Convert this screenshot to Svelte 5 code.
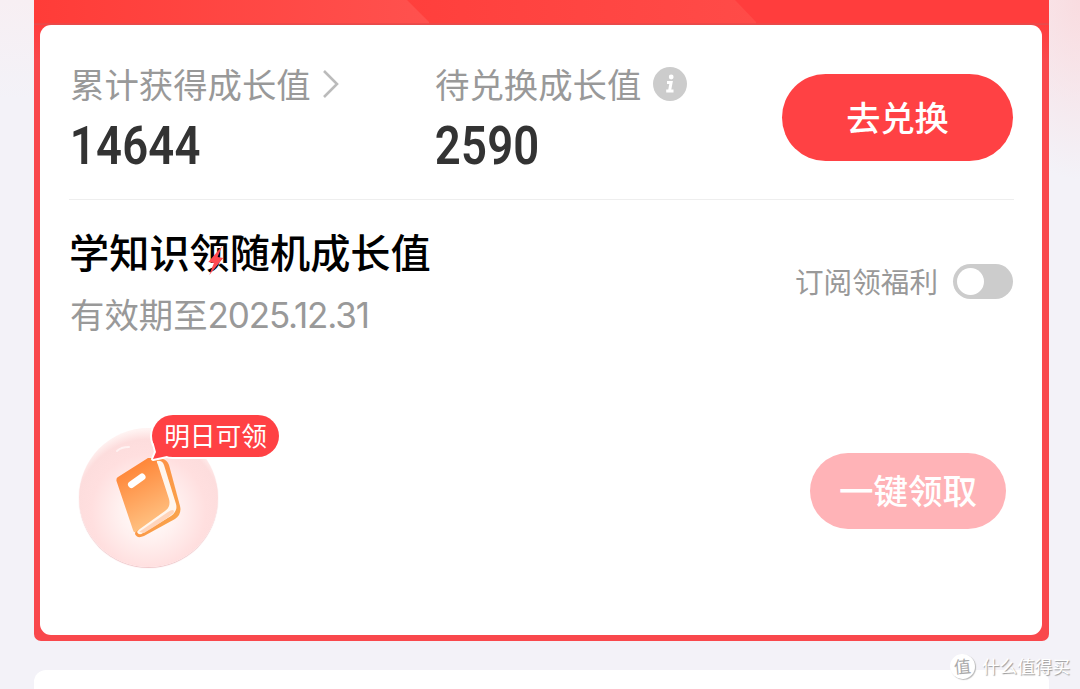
<script lang="ts">
	const stats = [
		{ label: '累计获得成长值', value: '14644', icon: 'arrow' },
		{ label: '待兑换成长值', value: '2590', icon: 'info' }
	];

	let subscribed = $state(false);
</script>

<div class="page">
	<section class="frame">
		<svg class="banner" viewBox="0 0 1015 25" aria-hidden="true">
			<defs>
				<linearGradient id="shade-a"><stop offset="0" stop-color="#ff3c38" /><stop offset="1" stop-color="#ff514e" /></linearGradient>
				<linearGradient id="shade-b"><stop offset="0" stop-color="#ff3e3b" /><stop offset="1" stop-color="#ff4b48" /></linearGradient>
			</defs>
			<path d="M340 0H701L722 22V25H340Z" fill="url(#shade-b)" />
			<path d="M0 0H373L395 22V25H0Z" fill="url(#shade-a)" />
			<path d="M0 23.2H1015V25H0Z" fill="#e94a4a" />
		</svg>

		<div class="card">
			<div class="stats">
				{#each stats as stat}
					<div class="stat">
						<div class="stat-label">
							<span>{stat.label}</span>
							{#if stat.icon === 'arrow'}
								<svg class="arrow" viewBox="0 0 18 32"><path d="M2 3L15 16L2 29" /></svg>
							{:else}
								<svg class="info" viewBox="0 0 34 34">
									<circle cx="17" cy="17" r="17" fill="#ccc" />
									<circle cx="18.2" cy="10" r="2.4" fill="#fff" />
									<path d="M14 15.5H18.1L16.5 24H20.5M13.2 24H17" fill="none" stroke="#fff" stroke-width="3" />
								</svg>
							{/if}
						</div>
						<div class="stat-value">{stat.value}</div>
					</div>
				{/each}
				<button class="exchange">去兑换</button>
			</div>

			<div class="task">
				<div class="task-text">
					<h2>
						学知识领随机成长值
						<svg class="bolt" viewBox="0 0 16 28"><path d="M14.5 0L1 15.5L6.5 16.5L2 28L15.5 11.5L10 10.5Z" /></svg>
					</h2>
					<p>有效期至<span class="date">2025.12.31</span></p>
				</div>
				<div class="subscribe">
					<span>订阅领福利</span>
					<button
						class="toggle"
						class:on={subscribed}
						aria-label="订阅领福利"
						onclick={() => (subscribed = !subscribed)}
					></button>
				</div>
			</div>

			<div class="reward">
				<div class="orb">
					<svg class="book" viewBox="0 0 240 180">
						<defs>
							<linearGradient id="cover" x1="0" y1="0" x2="0.35" y2="1">
								<stop offset="0" stop-color="#ff7928" />
								<stop offset="1" stop-color="#ffc080" />
							</linearGradient>
							<linearGradient id="edge" x1="0" y1="0" x2="1" y2="1">
								<stop offset="0" stop-color="#ff8840" />
								<stop offset="1" stop-color="#f8a94e" />
							</linearGradient>
						</defs>
						<path d="M57 51Q61 47 69 47" fill="none" stroke="#fff" stroke-width="2" stroke-linecap="round" opacity="0.6" />
						<path d="M88 58L103 59Q107 60 109 65L120 106Q122 114 115 119L84 136Q77 139 75 134Z" fill="url(#edge)" />
						<path d="M97 61Q102 60 104 65L116 104Q118 111 111 116L83 133Q79 136 77 132L80 128Z" fill="#fff6ed" />
						<path d="M79 132L108 112Q114 108 114 112Q112 116 84 133Z" fill="#ffd5bb" />
						<path d="M58 77L88 58Q96 57 98 65L109 99Q111 107 105 111L77 131Q74 134 73 130L56.5 81Q56 78 58 77Z" fill="url(#cover)" />
						<path d="M71.5 84.5L82 77" stroke="#fff" stroke-width="7" stroke-linecap="round" />
					</svg>
					<div class="tag">
						<svg class="tail" viewBox="0 0 18 20">
							<path class="outline" d="M2 3L4 12L1 19L15 16" />
							<path d="M1 1L4 12L1 19L15 16L18 1Z" />
						</svg>
						<span>明日可领</span>
					</div>
				</div>
				<button class="claim" disabled>一键领取</button>
			</div>
		</div>
	</section>

	<div class="next-card"></div>

	<div class="watermark">
		<span class="mark">值</span>
		<span>什么值得买</span>
	</div>
</div>

<style>
	.page {
		position: relative;
		box-sizing: border-box;
		width: 1080px;
		height: 689px;
		padding: 0 31px 0 34px;
		overflow: hidden;
		background:
			radial-gradient(ellipse 100px 180px at 1080px 0, #f9dce0, rgba(249, 220, 224, 0)),
			linear-gradient(180deg, #f7eff3 0, #f3f2f8 100px);
		font-family: 'Noto Sans CJK SC', sans-serif;
	}

	button {
		box-sizing: border-box;
		padding: 0;
		border: 0;
		color: #fff;
		font-family: inherit;
	}

	.frame {
		position: relative;
		box-sizing: border-box;
		height: 641px;
		padding: 25px 7px 6px 6px;
		border-radius: 0 0 7px 7px;
		background: linear-gradient(180deg, #ff3d3d 0, #ff3d3d 25px, #f9484c 60px);
	}

	.banner {
		position: absolute;
		top: 0;
		left: 0;
		width: 1015px;
		height: 25px;
	}

	.card {
		position: relative;
		box-sizing: border-box;
		height: 610px;
		padding: 0 28px 0 29px;
		border-radius: 11px;
		background: #fff;
	}

	.stats {
		display: flex;
		box-sizing: border-box;
		height: 175px;
		padding-top: 37px;
		border-bottom: 1px solid #eee;
	}

	.stat {
		width: 365px;
	}

	.stat + .stat {
		width: 348px;
	}

	.stat-label {
		display: flex;
		align-items: center;
		height: 44px;
		color: #999;
		font-size: 34.4px;
		line-height: 42px;
	}

	.stat-label span {
		height: 44px;
		margin-left: 1px;
	}

	.arrow {
		width: 18px;
		height: 32px;
		margin-left: 11px;
		fill: none;
		stroke: #bbb;
		stroke-width: 2.6;
	}

	.info {
		width: 34px;
		height: 34px;
		margin-left: 12px;
	}

	.stat-value {
		margin-top: 10px;
		padding-left: 1px;
		color: #333;
		font-family: Roboto, sans-serif;
		font-size: 53.5px;
		font-weight: 650;
		line-height: 60px;
		letter-spacing: 0.2px;
		transform: scaleX(0.85);
		transform-origin: left;
	}

	.exchange {
		width: 231px;
		height: 87px;
		margin-top: 12px;
		padding-bottom: 4px;
		border-radius: 44px;
		background: #ff4144;
		font-size: 34.2px;
		font-weight: 450;
	}

	.task {
		display: flex;
		justify-content: space-between;
		height: 191px;
		padding-top: 28px;
	}

	h2 {
		position: relative;
		margin: 0;
		color: #000;
		font-size: 40.2px;
		font-weight: 500;
		line-height: 46px;
	}

	.bolt {
		position: absolute;
		top: 18px;
		left: 138px;
		width: 17px;
		height: 29px;
		fill: #ff4a50;
	}

	.task p {
		margin: 17px 0 0;
		padding-left: 1px;
		color: #999;
		font-size: 34.4px;
		line-height: 44px;
	}

	.date {
		font-family: Inter, sans-serif;
		font-size: 35px;
		letter-spacing: -1.15px;
	}

	.subscribe {
		display: flex;
		align-items: center;
		height: 36px;
		margin: 35px 1px 0 0;
		gap: 15px;
		color: #999;
		font-size: 28.6px;
		line-height: 36px;
	}

	.toggle {
		width: 60px;
		height: 35px;
		padding: 4px;
		border-radius: 18px;
		background: #ccc;
	}

	.toggle::before {
		content: '';
		display: block;
		width: 27px;
		height: 27px;
		border-radius: 50%;
		background: #fff;
	}

	.toggle.on::before {
		margin-left: 25px;
	}

	.reward {
		display: flex;
		align-items: flex-start;
		justify-content: space-between;
		padding: 9px 8px 0 10px;
	}

	.orb {
		position: relative;
		width: 139px;
		height: 139px;
		border-radius: 50%;
		background: radial-gradient(circle 82px at 50% 60%, #fff 0, #fff1f0 35%, #ffdfdf 70%, #fddddd 88%, #fff3f2 100%);
		box-shadow: 0 1px 1px #efc5c8;
	}

	.book {
		position: absolute;
		top: -28px;
		left: -19px;
		width: 240px;
		height: 180px;
	}

	.tag {
		position: absolute;
		top: -13px;
		left: 73px;
		width: 127px;
		height: 42px;
		border-radius: 21px;
		background: #ff4144;
		color: #fff;
		font-size: 25.7px;
		line-height: 40px;
		text-align: center;
		box-shadow: 0 0 0 2px #fff;
	}

	.tag span {
		position: relative;
	}

	.tail {
		position: absolute;
		left: 0;
		bottom: -3px;
		width: 18px;
		height: 20px;
		overflow: visible;
		fill: #ff4144;
	}

	.tail .outline {
		fill: none;
		stroke: #fff;
		stroke-width: 4;
		stroke-linejoin: round;
	}

	.claim {
		width: 196px;
		height: 76px;
		margin-top: 25px;
		padding-bottom: 4px;
		border-radius: 38px;
		background: #ffb3b7;
		font-size: 34.5px;
		font-weight: 500;
	}

	.next-card {
		height: 40px;
		margin-top: 29px;
		border-radius: 12px;
		background: #fff;
	}

	.watermark {
		position: absolute;
		right: 10px;
		bottom: 9px;
		display: flex;
		align-items: center;
		gap: 7px;
		color: #fff;
		font-size: 17.6px;
		line-height: 28px;
		text-shadow: 1px 1px 1px #999;
	}

	.mark {
		width: 25px;
		height: 25px;
		border-radius: 50%;
		background: #fff;
		box-shadow: 1px 1px 1px #bbb;
		color: #aaa;
		font-size: 17px;
		line-height: 24px;
		text-align: center;
		text-shadow: none;
		transform: rotate(-5deg);
	}
</style>
